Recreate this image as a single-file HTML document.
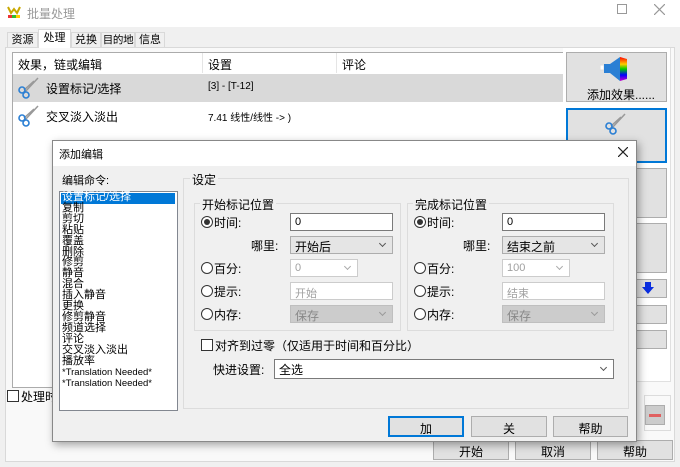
<!DOCTYPE html>
<html><head><meta charset="utf-8"><style>
*{box-sizing:border-box;margin:0;padding:0}
body{width:680px;height:467px;overflow:hidden;background:#f0f0f0;position:relative;font-family:"Liberation Sans","Noto Sans CJK SC",sans-serif;font-size:11px;color:#000}
.a{position:absolute;white-space:nowrap}
.btn{position:absolute;background:#e1e1e1;border:1px solid #adadad;text-align:center;font-size:12px}
.inp{position:absolute;background:#fff;border:1px solid #7a7a7a;font-size:11px;padding:2px 0 0 4px}
.dis{position:absolute;background:#fff;border:1px solid #ccc;color:#a0a0a0;font-size:11px;padding:2px 0 0 4px}
.cmb{position:absolute;background:#e5e5e5;border:1px solid #adadad;font-size:12px;padding:1px 0 0 4px}
.cmbd{position:absolute;background:#cccccc;border:1px solid #bfbfbf;color:#888;font-size:12px;padding:1px 0 0 4px}
.chev{position:absolute;right:7px;top:4px;width:5px;height:5px;border-right:1px solid #555;border-bottom:1px solid #555;transform:rotate(45deg)}
.rad{position:absolute;width:12px;height:12px;border:1px solid #333;border-radius:50%;background:#fff}
.rad.on::after{content:"";position:absolute;left:2px;top:2px;width:6px;height:6px;border-radius:50%;background:#333}
.grp{position:absolute;border:1px solid #dcdcdc}
.lbl{position:absolute;background:#f0f0f0;font-size:12px;padding:0 2px;white-space:nowrap}
.t12{font-size:12px}
.tab{position:absolute;top:32px;height:16px;border:1px solid #d9d9d9;background:#f0f0f0;font-size:11px;text-align:center;line-height:14px;white-space:nowrap}
</style></head><body>
<div class="a" style="left:0;top:0;width:680px;height:27px;background:#fff"></div>
<svg class="a" style="left:7px;top:5px" width="16" height="14"><path d="M1 2 L4 8 L7 4 L10 8 L13 2" stroke="#c9a800" stroke-width="2" fill="none"/><rect x="1" y="10" width="4" height="3" fill="#e33"/><rect x="5" y="10" width="4" height="3" fill="#3b3"/><rect x="9" y="10" width="4" height="3" fill="#fc0"/></svg>
<div class="a t12" style="left:27px;top:5px;color:#999">批量处理</div>
<div class="a" style="left:617px;top:4px;width:10px;height:10px;border:1px solid #999"></div>
<svg class="a" style="left:654px;top:4px" width="11" height="11"><path d="M0 0 L11 11 M11 0 L0 11" stroke="#999" stroke-width="1.2"/></svg>
<div class="a" style="left:5px;top:47px;width:670px;height:415px;background:#f9f9f9;border:1px solid #d9d9d9"></div>
<div class="tab" style="left:7px;width:31px">资源</div>
<div class="tab" style="left:38px;top:29px;width:33px;height:19px;background:#fff;border-bottom:none;line-height:16px">处理</div>
<div class="tab" style="left:71px;width:30px">兑换</div>
<div class="tab" style="left:101px;width:34px;font-size:10.5px;letter-spacing:-0.3px">目的地</div>
<div class="tab" style="left:135px;width:30px">信息</div>
<div class="a" style="left:12px;top:52px;width:552px;height:336px;background:#fff;border:1px solid #ababab"></div>
<div class="a t12" style="left:18px;top:56px">效果，链或编辑</div>
<div class="a" style="left:202px;top:53px;width:1px;height:20px;background:#e5e5e5"></div>
<div class="a t12" style="left:208px;top:56px">设置</div>
<div class="a" style="left:336px;top:53px;width:1px;height:20px;background:#e5e5e5"></div>
<div class="a t12" style="left:342px;top:56px">评论</div>
<div class="a" style="left:13px;top:74px;width:550px;height:28px;background:#d9d9d9"></div>
<svg class="a" style="left:16px;top:76px" width="24" height="24"><path d="M8 17 L22 2 M8 14 L18 5" stroke="#999" stroke-width="1.5" fill="none"/><circle cx="6" cy="14" r="3" stroke="#2a7fd4" stroke-width="1.6" fill="none"/><circle cx="10" cy="19" r="3" stroke="#2a7fd4" stroke-width="1.6" fill="none"/></svg>
<div class="a t12" style="left:46px;top:80px">设置标记/选择</div>
<div class="a" style="left:208px;top:81px;font-size:10px">[3] - [T-12]</div>
<svg class="a" style="left:16px;top:104px" width="24" height="24"><path d="M8 17 L22 2 M8 14 L18 5" stroke="#999" stroke-width="1.5" fill="none"/><circle cx="6" cy="14" r="3" stroke="#2a7fd4" stroke-width="1.6" fill="none"/><circle cx="10" cy="19" r="3" stroke="#2a7fd4" stroke-width="1.6" fill="none"/></svg>
<div class="a t12" style="left:46px;top:108px">交叉淡入淡出</div>
<div class="a" style="left:208px;top:109px;font-size:10px">7.41 线性/线性 -&gt; )</div>
<div class="a" style="left:563px;top:48px;width:108px;height:334px;background:#fff;border-right:1px solid #e0e0e0;border-bottom:1px solid #e0e0e0"></div>
<div class="btn" style="left:566px;top:52px;width:101px;height:50px"></div>
<svg class="a" style="left:600px;top:56px" width="30" height="26"><rect x="0" y="9" width="4" height="5" fill="#fff" stroke="#ddd"/><path d="M4 8 L10 8 L20 1 L20 25 L10 17 L4 17Z" fill="#2a7fd4"/><path d="M20 1 L27 3 L27 23 L20 25Z" fill="url(#g)"/><defs><linearGradient id="g" x1="0" y1="0" x2="0" y2="1"><stop offset="0" stop-color="#f00"/><stop offset=".3" stop-color="#fc0"/><stop offset=".5" stop-color="#0c0"/><stop offset=".75" stop-color="#00f"/><stop offset="1" stop-color="#c0c"/></linearGradient></defs></svg>
<div class="a t12" style="left:587px;top:86px">添加效果......</div>
<div class="btn" style="left:566px;top:108px;width:101px;height:55px;border:2px solid #0078d7"></div>
<svg class="a" style="left:603px;top:112px" width="24" height="24"><path d="M8 17 L22 2 M8 14 L18 5" stroke="#999" stroke-width="1.5" fill="none"/><circle cx="6" cy="14" r="3" stroke="#2a7fd4" stroke-width="1.6" fill="none"/><circle cx="10" cy="19" r="3" stroke="#2a7fd4" stroke-width="1.6" fill="none"/></svg>
<div class="btn" style="left:566px;top:168px;width:101px;height:50px"></div>
<div class="btn" style="left:566px;top:223px;width:101px;height:50px"></div>
<div class="btn" style="left:566px;top:279px;width:101px;height:19px"></div>
<svg class="a" style="left:641px;top:281px" width="14" height="14"><path d="M4 1 H10 V6 H13 L7 13 L1 6 H4Z" fill="#0a2ee0"/></svg>
<div class="btn" style="left:566px;top:305px;width:101px;height:19px"></div>
<div class="btn" style="left:566px;top:330px;width:101px;height:19px"></div>
<div class="grp" style="left:644px;top:395px;width:27px;height:36px"></div>
<div class="btn" style="left:645px;top:405px;width:20px;height:20px;background:#ccc"></div>
<div class="a" style="left:649px;top:414px;width:12px;height:3px;background:#e06060"></div>
<div class="a" style="left:7px;top:390px;width:12px;height:12px;border:1px solid #333;background:#fff"></div>
<div class="a t12" style="left:21px;top:388px">处理时</div>
<div class="btn" style="left:433px;top:440px;width:76px;height:20px;padding-top:2px">开始</div>
<div class="btn" style="left:515px;top:440px;width:76px;height:20px;padding-top:2px">取消</div>
<div class="btn" style="left:597px;top:440px;width:76px;height:20px;padding-top:2px">帮助</div>

<div class="a" style="left:52px;top:140px;width:585px;height:302px;background:#f0f0f0;border:1px solid #888;box-shadow:2px 3px 8px rgba(0,0,0,.35)"></div>
<div class="a" style="left:53px;top:141px;width:583px;height:25px;background:#fff"></div>
<div class="a" style="left:59px;top:146px">添加编辑</div>
<svg class="a" style="left:618px;top:147px" width="10" height="10"><path d="M0 0 L10 10 M10 0 L0 10" stroke="#222" stroke-width="1.2"/></svg>
<div class="a" style="left:62px;top:172px">编辑命令:</div>
<div class="a" style="left:59px;top:191px;width:119px;height:220px;background:#fff;border:1px solid #828790"></div>
<div class="a" style="left:61px;top:193px;width:114px;height:11px;background:#0078d7"></div>
<div class="a" style="left:62px;top:192px;font-size:11px;line-height:10.9px;color:#000">
<span style="color:#fff">设置标记/选择</span><br>复制<br>剪切<br>粘贴<br>覆盖<br>删除<br>修剪<br>静音<br>混合<br>插入静音<br>更换<br>修剪静音<br>频道选择<br>评论<br>交叉淡入淡出<br>播放率<br><span style="font-size:9.5px">*Translation Needed*</span><br><span style="font-size:9.5px">*Translation Needed*</span></div>
<div class="grp" style="left:183px;top:178px;width:446px;height:231px"></div>
<div class="lbl" style="left:190px;top:171px">设定</div>
<div class="grp" style="left:194px;top:203px;width:207px;height:128px"></div>
<div class="lbl" style="left:200px;top:196px">开始标记位置</div>
<div class="rad on" style="left:201px;top:216px"></div><div class="a t12" style="left:214px;top:214px">时间:</div>
<div class="inp" style="left:290px;top:213px;width:103px;height:18px">0</div>
<div class="a t12" style="left:251px;top:237px">哪里:</div>
<div class="cmb" style="left:290px;top:236px;width:103px;height:18px">开始后<span class="chev"></span></div>
<div class="rad" style="left:201px;top:262px"></div><div class="a t12" style="left:214px;top:260px">百分:</div>
<div class="dis" style="left:290px;top:259px;width:68px;height:18px">0<span class="chev" style="border-color:#aaa"></span></div>
<div class="rad" style="left:201px;top:285px"></div><div class="a t12" style="left:214px;top:283px">提示:</div>
<div class="dis" style="left:290px;top:282px;width:103px;height:18px">开始</div>
<div class="rad" style="left:201px;top:308px"></div><div class="a t12" style="left:214px;top:306px">内存:</div>
<div class="cmbd" style="left:290px;top:305px;width:103px;height:18px">保存<span class="chev" style="border-color:#999"></span></div>
<div class="grp" style="left:407px;top:203px;width:207px;height:128px"></div>
<div class="lbl" style="left:413px;top:196px">完成标记位置</div>
<div class="rad on" style="left:414px;top:216px"></div><div class="a t12" style="left:427px;top:214px">时间:</div>
<div class="inp" style="left:502px;top:213px;width:103px;height:18px">0</div>
<div class="a t12" style="left:463px;top:237px">哪里:</div>
<div class="cmb" style="left:502px;top:236px;width:103px;height:18px">结束之前<span class="chev"></span></div>
<div class="rad" style="left:414px;top:262px"></div><div class="a t12" style="left:427px;top:260px">百分:</div>
<div class="dis" style="left:502px;top:259px;width:68px;height:18px">100<span class="chev" style="border-color:#aaa"></span></div>
<div class="rad" style="left:414px;top:285px"></div><div class="a t12" style="left:427px;top:283px">提示:</div>
<div class="dis" style="left:502px;top:282px;width:103px;height:18px">结束</div>
<div class="rad" style="left:414px;top:308px"></div><div class="a t12" style="left:427px;top:306px">内存:</div>
<div class="cmbd" style="left:502px;top:305px;width:103px;height:18px">保存<span class="chev" style="border-color:#999"></span></div>
<div class="a" style="left:201px;top:339px;width:12px;height:12px;border:1px solid #333;background:#fff"></div>
<div class="a t12" style="left:215px;top:337px">对齐到过零（仅适用于时间和百分比）</div>
<div class="a t12" style="left:213px;top:361px">快进设置:</div>
<div class="inp" style="left:274px;top:359px;width:340px;height:20px;font-size:12px;padding-top:1px">全选<span class="chev" style="top:5px"></span></div>
<div class="btn" style="left:388px;top:416px;width:76px;height:21px;border:2px solid #0078d7;padding-top:2px">加</div>
<div class="btn" style="left:471px;top:416px;width:76px;height:21px;padding-top:3px">关</div>
<div class="btn" style="left:553px;top:416px;width:75px;height:21px;padding-top:3px">帮助</div>
</body></html>
